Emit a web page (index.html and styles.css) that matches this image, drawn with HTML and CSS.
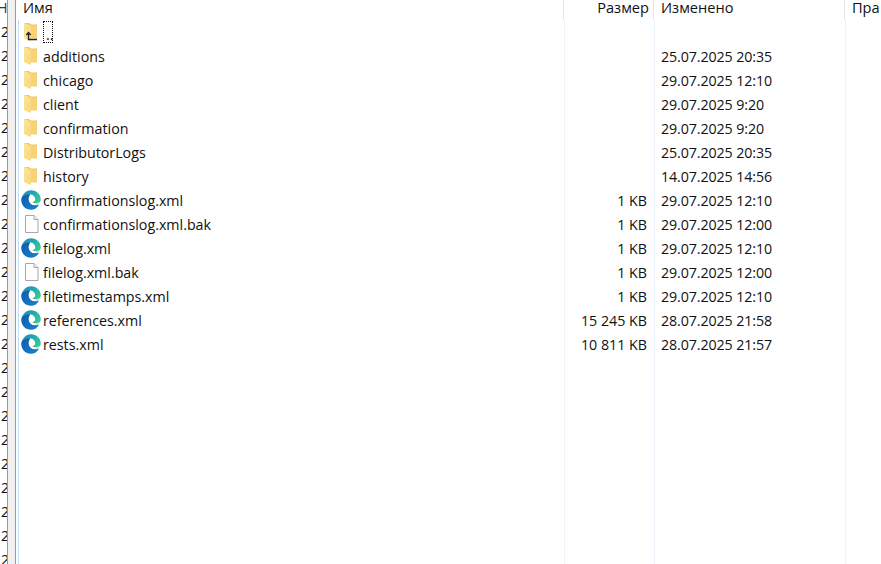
FILE: index.html
```html
<!DOCTYPE html>
<html lang="ru">
<head>
<meta charset="utf-8">
<title>Файлы</title>
<link rel="stylesheet" href="styles.css">
</head>
<body>
<svg class="defs" width="0" height="0" aria-hidden="true">
  <defs>
    <linearGradient id="fold" x1="0" y1="0" x2="1" y2="1"><stop offset="0" stop-color="#fbe5a0"/><stop offset="1" stop-color="#f8d67a"/></linearGradient>
    <linearGradient id="edgeA" x1="0" y1="0" x2="1" y2="1"><stop offset="0" stop-color="#1583c4"/><stop offset=".6" stop-color="#2bb8a8"/><stop offset="1" stop-color="#45cf80"/></linearGradient>
    <linearGradient id="edgeB" x1="0" y1="0" x2="1" y2="1"><stop offset="0" stop-color="#0c5aa2"/><stop offset="1" stop-color="#1a84d2"/></linearGradient>
    <symbol id="folder" viewBox="0 0 13 18">
      <path d="M0 0h5l2 1.500h6V15H6.500L0 13z" fill="#f2c45c"/>
      <path d="M7 2.500h6V15.500H7z" fill="#f8d274"/>
      <path d="M0 0l7 2.500V18L0 15z" fill="url(#fold)"/>
    </symbol>
    <symbol id="edge" viewBox="0 0 20 20">
      <path d="M.3 10C.3 5.500 4 2.500 9.500 4.500 8 6 7.300 8.500 7.800 10.500 8.500 13.500 11 15.200 13.500 15.200 15 15.200 17 14.800 18.200 14 16.500 18 13.500 19.800 10 19.800 4.500 19.800.3 15.500.3 10z" fill="url(#edgeB)"/>
      <path d="M.8 8C2 3.500 5.500.2 10 .2c5.500 0 9.800 4.200 9.800 9.300 0 2.600-2.200 3.900-4.500 3.900-1.900 0-3.400-.6-3.800-1.400 1.700-.3 2.700-1.200 2.700-2.500 0-3-2.900-5.200-5.700-5.200C5 4.300 2.300 6 .8 8z" fill="url(#edgeA)"/>
    </symbol>
    <symbol id="doc" viewBox="0 0 15 18">
      <path d="M1.500 .5h8.500l4 4v13h-12.500z" fill="#fff" stroke="#a8a8a8"/>
      <path d="M10 .5v4h4" fill="#eee" stroke="#a8a8a8"/>
    </symbol>
  </defs>
</svg>
<div class="window">
  <div class="tree" aria-hidden="true">
    <div class="tree-head">Н</div>
    <div class="tree-row">2</div><div class="tree-row">2</div><div class="tree-row">2</div><div class="tree-row">2</div>
    <div class="tree-row">2</div><div class="tree-row">2</div><div class="tree-row">2</div><div class="tree-row">2</div>
    <div class="tree-row">2</div><div class="tree-row">2</div><div class="tree-row">2</div><div class="tree-row">2</div>
    <div class="tree-row">2</div><div class="tree-row">2</div><div class="tree-row">2</div><div class="tree-row">2</div>
    <div class="tree-row">2</div><div class="tree-row">2</div><div class="tree-row">2</div><div class="tree-row">2</div>
    <div class="tree-row">2</div><div class="tree-row">2</div><div class="tree-row">2</div>
  </div>
  <div class="splitter"></div>
  <main class="list">
    <div class="row head">
      <div class="c name">Имя</div><div class="c size">Размер</div><div class="c date">Изменено</div><div class="c rights">Пра</div>
    </div>
    <div class="body">
      <div class="row"><div class="c name"><svg class="ic fo"><use href="#folder"/></svg><svg class="arrow" viewBox="0 0 12 10"><path d="M3.500 1.500V8.500H12M1.300 4L3.500 1.500 5.700 4" fill="none" stroke="#222" stroke-width="1.300"/></svg><span class="focus">..</span></div><div class="c size"></div><div class="c date"></div><div class="c rights"></div></div>
      <div class="row"><div class="c name"><svg class="ic fo"><use href="#folder"/></svg><span>additions</span></div><div class="c size"></div><div class="c date">25.07.2025 20:35</div><div class="c rights"></div></div>
      <div class="row"><div class="c name"><svg class="ic fo"><use href="#folder"/></svg><span>chicago</span></div><div class="c size"></div><div class="c date">29.07.2025 12:10</div><div class="c rights"></div></div>
      <div class="row"><div class="c name"><svg class="ic fo"><use href="#folder"/></svg><span>client</span></div><div class="c size"></div><div class="c date">29.07.2025 9:20</div><div class="c rights"></div></div>
      <div class="row"><div class="c name"><svg class="ic fo"><use href="#folder"/></svg><span>confirmation</span></div><div class="c size"></div><div class="c date">29.07.2025 9:20</div><div class="c rights"></div></div>
      <div class="row"><div class="c name"><svg class="ic fo"><use href="#folder"/></svg><span>DistributorLogs</span></div><div class="c size"></div><div class="c date">25.07.2025 20:35</div><div class="c rights"></div></div>
      <div class="row"><div class="c name"><svg class="ic fo"><use href="#folder"/></svg><span>history</span></div><div class="c size"></div><div class="c date">14.07.2025 14:56</div><div class="c rights"></div></div>
      <div class="row"><div class="c name"><svg class="ic ed"><use href="#edge"/></svg><span>confirmationslog.xml</span></div><div class="c size">1 KB</div><div class="c date">29.07.2025 12:10</div><div class="c rights"></div></div>
      <div class="row"><div class="c name"><svg class="ic dc"><use href="#doc"/></svg><span>confirmationslog.xml.bak</span></div><div class="c size">1 KB</div><div class="c date">29.07.2025 12:00</div><div class="c rights"></div></div>
      <div class="row"><div class="c name"><svg class="ic ed"><use href="#edge"/></svg><span>filelog.xml</span></div><div class="c size">1 KB</div><div class="c date">29.07.2025 12:10</div><div class="c rights"></div></div>
      <div class="row"><div class="c name"><svg class="ic dc"><use href="#doc"/></svg><span>filelog.xml.bak</span></div><div class="c size">1 KB</div><div class="c date">29.07.2025 12:00</div><div class="c rights"></div></div>
      <div class="row"><div class="c name"><svg class="ic ed"><use href="#edge"/></svg><span>filetimestamps.xml</span></div><div class="c size">1 KB</div><div class="c date">29.07.2025 12:10</div><div class="c rights"></div></div>
      <div class="row"><div class="c name"><svg class="ic ed"><use href="#edge"/></svg><span>references.xml</span></div><div class="c size">15 245 KB</div><div class="c date">28.07.2025 21:58</div><div class="c rights"></div></div>
      <div class="row"><div class="c name"><svg class="ic ed"><use href="#edge"/></svg><span>rests.xml</span></div><div class="c size">10 811 KB</div><div class="c date">28.07.2025 21:57</div><div class="c rights"></div></div>
      <div class="row filler"><div class="c name"></div><div class="c size"></div><div class="c date"></div><div class="c rights"></div></div>
    </div>
  </main>
</div>
</body>
</html>
```
FILE: styles.css
```css
html, body { margin: 0; padding: 0; height: 100%; background: #fff; overflow: hidden; }
body { font-family: "Open Sans", "Noto Sans", sans-serif; font-size: 14.25px; color: #111; }
.defs { position: absolute; }
.window { display: flex; height: 564px; width: 881px; }

.tree { width: 7px; overflow: hidden; flex: none; line-height: 24px; }
.tree-head { height: 20px; line-height: 16px; margin-left: -3px; white-space: nowrap; color: #1f3a5f; }
.tree-row { height: 24px; margin-left: 1px; }
.splitter { width: 7px; flex: none; background: #f0f0f0; border-left: 1px solid #9a9aa2; border-right: 1px solid #9a9aa2; }

.list { flex: 1; min-width: 0; display: flex; flex-direction: column; padding-left: 1px; }
.row { display: grid; grid-template-columns: 547px 90px 191px 1fr; height: 24px; }
.head { height: 20px; font-size: 14.6px; }
.body { flex: 1; display: flex; flex-direction: column; border-left: 1px solid #bcdcf8; margin-left: 1px; }
.body .row { grid-template-columns: 546px 90px 191px 1fr; }
.filler { flex: 1; }

.c { display: flex; align-items: center; white-space: nowrap; overflow: hidden; box-sizing: border-box; border-right: 1px solid #eef4fb; position: relative; }
.head .c { border-right-color: #e5e5e5; align-items: flex-start; line-height: 15px; }
.rights { border-right: 0; }
.name { padding-left: 24px; }
.head .name { padding-left: 6px; }
.size { justify-content: flex-end; padding-right: 7px; }
.head .size { padding-right: 4px; }
.date, .rights { padding-left: 6px; }
.head .date, .head .rights { padding-left: 7px; }
.body .date { letter-spacing: -.1px; }

.ic { position: absolute; display: block; }
.fo { left: 5px; top: 3px; width: 13px; height: 18px; }
.ed { left: 2px; top: 2px; width: 20px; height: 20px; }
.dc { left: 5px; top: 3px; width: 15px; height: 18px; }
.arrow { position: absolute; left: 6px; top: 11px; width: 12px; height: 10px; }
.focus { display: inline-block; width: 10px; height: 22px; margin-top: -1px; outline: 1px dotted #111; outline-offset: -1px; line-height: 28px; padding-left: 3px; box-sizing: border-box; }
```
